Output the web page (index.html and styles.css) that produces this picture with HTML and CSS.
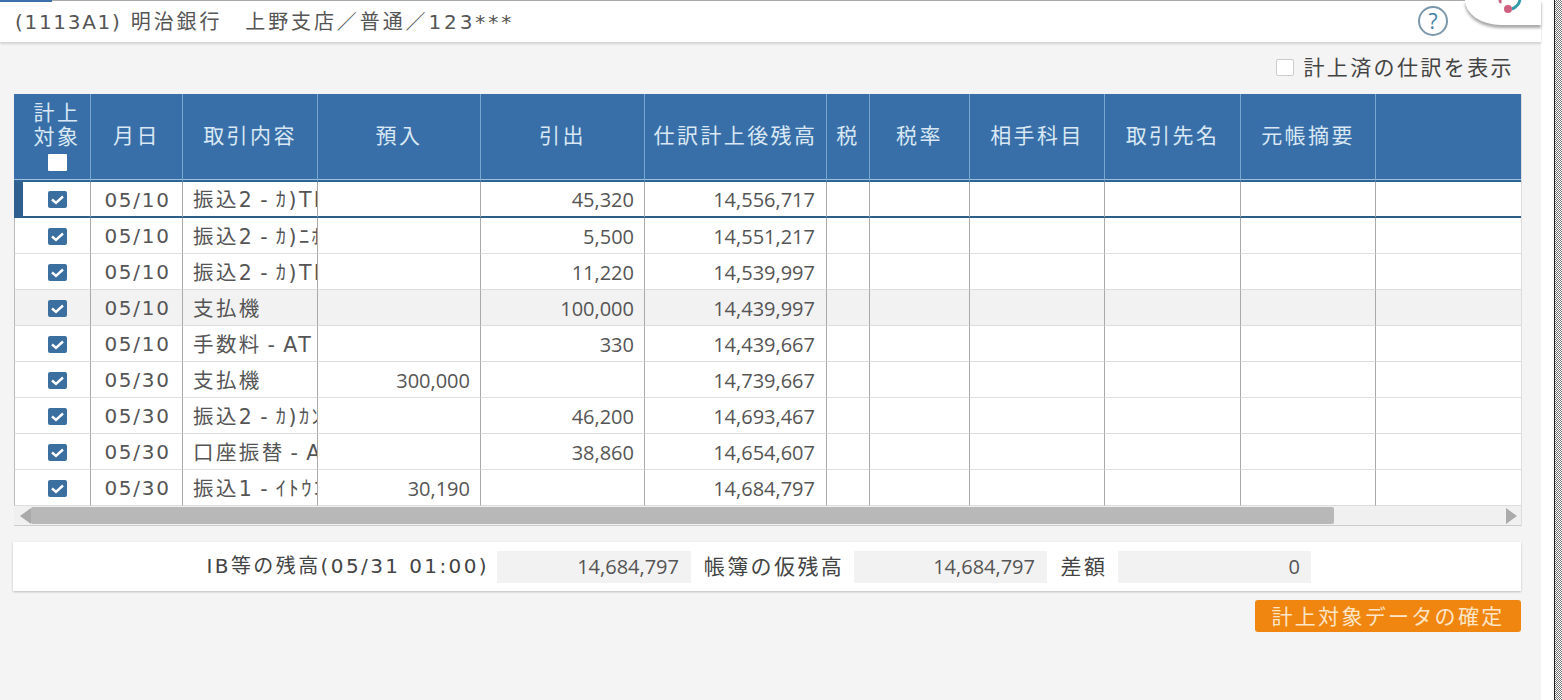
FILE: index.html
```html
<!DOCTYPE html>
<html lang="ja">
<head>
  <meta charset="UTF-8">
  <title>仕訳計上</title>
  <link rel="stylesheet" href="styles.css">
</head>
<body>
  <div class="page">
    <header class="topbar">
      <div class="tab-mark"></div>
      <div class="title"><span class="code">(1113A1)</span> 明治銀行　上野支店／普通／123***</div>
      <div class="help">?</div>
      <div class="float-btn">
        <svg width="76" height="14" viewBox="0 0 76 14">
          <path d="M55 0c-1 4-3 7-8 9" fill="none" stroke="#2f9aa8" stroke-width="3"/>
          <path d="M35 0c0 1 .5 2 1.500 2" fill="none" stroke="#c9607f" stroke-width="3"/>
          <circle cx="43" cy="9" r="4" fill="#d0607f"/>
        </svg>
      </div>
    </header>

    <main class="content">
      <div class="options">
        <span class="plain-check"></span>
        <span class="options-label">計上済の仕訳を表示</span>
      </div>

      <table class="journal">
        <colgroup>
          <col class="c-check"><col class="c-date"><col class="c-desc"><col class="c-in"><col class="c-out"><col class="c-bal">
          <col class="c-tax"><col class="c-rate"><col class="c-acct"><col class="c-party"><col class="c-memo"><col>
        </colgroup>
        <thead>
          <tr>
            <th class="th-check">計上<br>対象<span class="head-check"></span></th>
            <th>月日</th>
            <th>取引内容</th>
            <th>預入</th>
            <th>引出</th>
            <th>仕訳計上後残高</th>
            <th>税</th>
            <th>税率</th>
            <th>相手科目</th>
            <th>取引先名</th>
            <th>元帳摘要</th>
            <th></th>
          </tr>
        </thead>
        <tbody id="rows"></tbody>
      </table>

      <div class="hscroll">
        <span class="arrow arrow-left"></span>
        <span class="thumb"></span>
        <span class="arrow arrow-right"></span>
      </div>

      <section class="totals">
        <div class="t-label t-first">IB等の残高(05/31 01:00)</div>
        <div class="t-value">14,684,797</div>
        <div class="t-label">帳簿の仮残高</div>
        <div class="t-value">14,684,797</div>
        <div class="t-label">差額</div>
        <div class="t-value">0</div>
      </section>

      <div class="actions">
        <button class="confirm">計上対象データの確定</button>
      </div>
    </main>
  </div>
  <div class="edge"></div>
  <div class="dither"></div>

  <script>
    const entries = [
      { date: '05/10', desc: '振込2 - ｶ)TI', out: '45,320', bal: '14,556,717' },
      { date: '05/10', desc: '振込2 - ｶ)ﾆﾎ', out: '5,500', bal: '14,551,217' },
      { date: '05/10', desc: '振込2 - ｶ)TI', out: '11,220', bal: '14,539,997' },
      { date: '05/10', desc: '支払機', out: '100,000', bal: '14,439,997' },
      { date: '05/10', desc: '手数料 - AT', out: '330', bal: '14,439,667' },
      { date: '05/30', desc: '支払機', dep: '300,000', bal: '14,739,667' },
      { date: '05/30', desc: '振込2 - ｶ)ｶﾝ', out: '46,200', bal: '14,693,467' },
      { date: '05/30', desc: '口座振替 - A', out: '38,860', bal: '14,654,607' },
      { date: '05/30', desc: '振込1 - ｲﾄｳｺ', dep: '30,190', bal: '14,684,797' }
    ];

    const tick = '<svg class="tick" viewBox="0 0 19 17"><rect width="19" height="17" rx="2" fill="#3b6f9f"/><path d="M4 8.500l4 3.500 7-6.500" fill="none" stroke="#fff" stroke-width="2.400"/></svg>';

    document.getElementById('rows').innerHTML = entries.map((e, i) => `
      <tr class="${i === 0 ? 'current' : ''} ${i === 3 ? 'shaded' : ''}">
        <td class="td-check">${tick}</td>
        <td class="td-date">${e.date}</td>
        <td class="td-desc"><div class="clip">${e.desc}</div></td>
        <td class="num">${e.dep || ''}</td>
        <td class="num">${e.out || ''}</td>
        <td class="num num-bal">${e.bal}</td>
        <td></td><td></td><td></td><td></td><td></td><td></td>
      </tr>
    `).join('');
  </script>
</body>
</html>
```

FILE: styles.css
```css
* { box-sizing: border-box; margin: 0; padding: 0; }
html, body { height: 100%; overflow: hidden; }
body { display: flex; background-color: #fff; color: #555; font-family: "DejaVu Sans", "Noto Sans CJK JP", sans-serif; }

.page { width: 1541px; height: 700px; flex: none; background-color: #f4f4f4; position: relative; }
.edge { width: 14px; flex: none; background-color: #fff; border-right: 1px solid #222; }
.dither { flex: 1; background: repeating-conic-gradient(#777 0 25%, #fff 0 50%) 0 0 / 2px 2px; }

.topbar { height: 42px; background-color: #fff; border-top: 1px solid #aaa; box-shadow: 0 2px 2px #d4d4d4; display: flex; align-items: center; padding: 0 0 2px 15px; position: relative; }
.tab-mark { position: absolute; left: 0; top: -1px; width: 52px; height: 2px; background-color: #3a6fa8; }
.title { font-size: 20px; letter-spacing: 2.9px; flex: 1; margin-bottom: 1px; }
.code { letter-spacing: 1.7px; }
.help { width: 30px; height: 30px; margin-right: 93px; border: 2px solid #7b98ad; border-radius: 50%; color: #3f7fa8; font-family: "Open Sans", sans-serif; font-size: 21px; line-height: 26px; text-align: center; }
.float-btn { position: absolute; right: 0; top: -1px; width: 76px; height: 25px; background-color: #fff; border-bottom-left-radius: 36px 25px; box-shadow: 0 3px 3px #a8a8a8; }
.float-btn svg { display: block; }

.content { padding: 0 20px 0 14px; }
.options { height: 52px; display: flex; align-items: center; justify-content: flex-end; padding: 0 7px 5px 0; }
.plain-check { width: 18px; height: 17px; margin-top: 4px; background-color: #fff; border: 1px solid #ccc; border-radius: 2px; margin-right: 9px; }
.options-label { font-family: "Noto Sans CJK JP", sans-serif; font-size: 21px; letter-spacing: 2.4px; color: #444; }

.journal { width: 1507px; table-layout: fixed; border-collapse: separate; border-spacing: 0; background-color: #fff; box-shadow: 1px 0 0 #ddd; }
.c-check { width: 77px; }
.c-date { width: 92px; }
.c-desc { width: 135px; }
.c-in { width: 163px; }
.c-out { width: 164px; }
.c-bal { width: 182px; }
.c-tax { width: 43px; }
.c-rate { width: 100px; }
.c-acct { width: 135px; }
.c-party { width: 136px; }
.c-memo { width: 135px; }

.journal th { height: 88px; background-color: #386fa8; color: #d9e8f4; font-family: "Noto Sans CJK JP", sans-serif; font-size: 21px; font-weight: 400; letter-spacing: 2.4px; line-height: 24px; text-align: center; vertical-align: middle; border-right: 1px solid #7ba6d0; border-bottom: 2px solid #2f6496; box-shadow: inset 0 -1px 0 #9fc0dc; white-space: nowrap; padding: 0 0 6px; }
.journal th:last-child { border-right: none; }
.journal .th-check { padding: 0 0 4px 10px; }
.head-check { display: block; width: 19px; height: 17px; margin: 7px auto 0; background-color: #fff; border-radius: 1px; }

.journal td { height: 36px; padding-top: 1px; border-right: 1px solid #aaa; border-bottom: 1px solid #ddd; font-size: 20px; white-space: nowrap; }
.journal td:first-child { border-left: 1px solid #bbb; }
.journal td:last-child { border-right: none; }
.shaded td { background-color: #f2f2f2; }
.current td { border-bottom: 2px solid #2c5f88; }
.current td:first-child { border-left: 9px solid #2f6090; }

.journal .td-check { padding-left: 10px; }
.journal .current .td-check { padding-left: 2px; }
.tick { display: block; width: 19px; height: 17px; margin: 0 auto; }
.td-date { text-align: center; letter-spacing: 1.7px; padding-left: 2px; }
.td-desc { padding-left: 10px; }
.clip { overflow: hidden; font-size: 20.5px; letter-spacing: 2.4px; word-spacing: -3px; line-height: 28px; padding-top: 1px; }
.num { text-align: right; padding-right: 10px; font-family: "Open Sans", sans-serif; }
.num-bal { padding-right: 11px; }

.hscroll { width: 1507px; height: 20px; background-color: #f0f0f0; border-bottom: 1px solid #ccc; box-shadow: 1px 0 0 #ddd; display: flex; align-items: center; padding: 0 4px; }
.arrow { width: 0; height: 0; border-top: 8px solid transparent; border-bottom: 8px solid transparent; }
.arrow-left { border-right: 11px solid #aaa; margin-left: 2px; }
.arrow-right { border-left: 11px solid #aaa; margin-left: auto; }
.thumb { width: 1303px; height: 17px; background-color: #b8b8b8; border-radius: 2px; }

.totals { width: 1508px; height: 49px; margin-top: 16px; margin-left: -1px; background-color: #fff; box-shadow: 0 1px 2px #bbb; display: grid; grid-template-columns: 484px 194px 163px 193px 71px 193px; align-items: center; }
.t-label { font-size: 21px; letter-spacing: 2.4px; text-align: center; color: #444; padding: 0 0 4px 3px; }
.t-label.t-first { font-size: 20px; text-align: right; padding: 0 8px 4px 0; }
.t-value { height: 32px; background-color: #f2f2f2; font-family: "Open Sans", sans-serif; font-size: 20px; line-height: 32px; text-align: right; padding-right: 12px; }
.t-value:last-child { padding-right: 11px; }

.actions { display: flex; justify-content: flex-end; margin-top: 9px; }
.confirm { width: 266px; height: 32px; background-color: #f08510; border: none; border-radius: 3px; color: #fde6c8; font-family: "Noto Sans CJK JP", sans-serif; font-size: 21px; letter-spacing: 2.3px; line-height: 30px; padding-bottom: 4px; }
```
